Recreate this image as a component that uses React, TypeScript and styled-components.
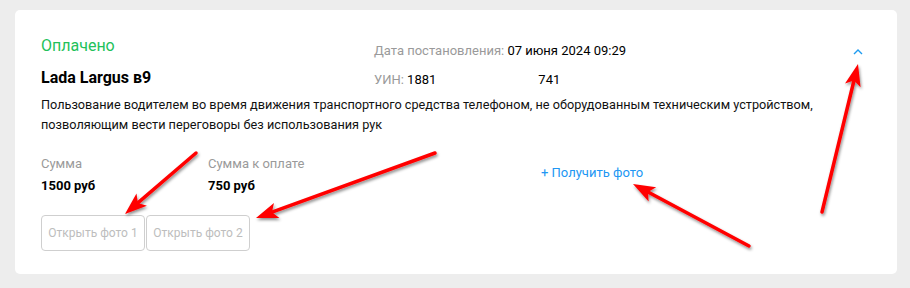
import React from "react";
import styled, { createGlobalStyle } from "styled-components";

const GlobalStyle = createGlobalStyle`
  body {
    margin: 0;
    background: #ededed;
    font-family: Roboto, "Liberation Sans", Arial, sans-serif;
  }
`;

const Page = styled.div`
  position: relative;
  width: 910px;
  height: 288px;
  padding: 10px 13px 14px 15px;
  box-sizing: border-box;
`;

const Card = styled.div`
  background: #ffffff;
  border-radius: 5px;
  padding: 26px 26px 24px 26px;
  height: 100%;
  box-sizing: border-box;
`;

const Header = styled.div`
  display: grid;
  grid-template-columns: 333px 1fr 20px;
`;

const Status = styled.div`
  color: #22c15a;
  font-size: 16px;
  line-height: 19px;
`;

const CarName = styled.div`
  margin-top: 13px;
  color: #000;
  font-size: 16px;
  font-weight: 700;
  line-height: 19px;
`;

const Meta = styled.div`
  padding-top: 7px;
  display: flex;
  flex-direction: column;
  gap: 13px;
`;

const MetaRow = styled.div`
  font-size: 13px;
  line-height: 16px;
  color: #000;
`;

const MetaLabel = styled.span`
  color: #9a9a9a;
`;

const Hidden = styled.span`
  display: inline-block;
  width: 102px;
`;

const Chevron = styled.button`
  align-self: start;
  margin-top: 9px;
  border: 0;
  padding: 0;
  background: none;
  width: 14px;
  height: 14px;
  display: flex;
  align-items: center;
  justify-content: center;
  cursor: pointer;
`;

const Description = styled.p`
  margin: 7px 0 0 0;
  font-size: 12.7px;
  line-height: 19.5px;
  color: #111;
`;

const Bottom = styled.div`
  margin-top: 22px;
  display: grid;
  grid-template-columns: 500px 1fr;
`;

const Sums = styled.div`
  display: grid;
  grid-template-columns: 167px auto;
`;

const SumLabel = styled.div`
  font-size: 13px;
  line-height: 16px;
  color: #9a9a9a;
`;

const SumValue = styled.div`
  margin-top: 6px;
  font-size: 13px;
  line-height: 16px;
  font-weight: 700;
  color: #000;
`;

const GetPhoto = styled.a`
  margin-top: 9px;
  align-self: start;
  font-size: 13px;
  line-height: 16px;
  color: #2196f3;
  text-decoration: none;
  cursor: pointer;
`;

const Buttons = styled.div`
  margin-top: 21px;
  display: flex;
  gap: 1px;
`;

const PhotoButton = styled.button`
  width: 104px;
  height: 36px;
  border: 1px solid #cfcfcf;
  border-radius: 4px;
  background: #fff;
  color: #bdbdbd;
  font-family: Roboto, "Liberation Sans", Arial, sans-serif;
  font-size: 12px;
  padding: 0;
`;

const Overlay = styled.svg`
  position: absolute;
  left: 0;
  top: 0;
  pointer-events: none;
`;

type ArrowProps = { x1: number; y1: number; x2: number; y2: number };

const Arrow: React.FC<ArrowProps> = ({ x1, y1, x2, y2 }) => {
  const dx = x2 - x1;
  const dy = y2 - y1;
  const len = Math.hypot(dx, dy);
  const ux = dx / len;
  const uy = dy / len;
  const head = 22;
  const half = 8;
  const bx = x2 - ux * head;
  const by = y2 - uy * head;
  const pts = `${x2},${y2} ${bx - uy * half},${by + ux * half} ${bx + ux * 5},${by + uy * 5} ${bx + uy * half},${by - ux * half}`;
  return (
    <g filter="url(#shadow)">
      <line x1={x1} y1={y1} x2={bx + ux * 5} y2={by + uy * 5} stroke="#ff0000" strokeWidth={3.5} strokeLinecap="round" />
      <polygon points={pts} fill="#ff0000" />
    </g>
  );
};

export default function App() {
  return (
    <>
      <GlobalStyle />
      <Page>
        <Card>
          <Header>
            <div>
              <Status>Оплачено</Status>
              <CarName>Lada Largus в9</CarName>
            </div>
            <Meta>
              <MetaRow>
                <MetaLabel>Дата постановления: </MetaLabel>07 июня 2024 09:29
              </MetaRow>
              <MetaRow>
                <MetaLabel>УИН: </MetaLabel>1881<Hidden />741
              </MetaRow>
            </Meta>
            <Chevron aria-label="Свернуть">
              <svg width="10" height="6" viewBox="0 0 10 6">
                <path d="M1 5 L5 1 L9 5" fill="none" stroke="#1e9bf0" strokeWidth="1.4" />
              </svg>
            </Chevron>
          </Header>
          <Description>
            Пользование водителем во время движения транспортного средства телефоном, не оборудованным техническим
            устройством, позволяющим вести переговоры без использования рук
          </Description>
          <Bottom>
            <div>
              <Sums>
                <div>
                  <SumLabel>Сумма</SumLabel>
                  <SumValue>1500 руб</SumValue>
                </div>
                <div>
                  <SumLabel>Сумма к оплате</SumLabel>
                  <SumValue>750 руб</SumValue>
                </div>
              </Sums>
              <Buttons>
                <PhotoButton>Открыть фото 1</PhotoButton>
                <PhotoButton>Открыть фото 2</PhotoButton>
              </Buttons>
            </div>
            <GetPhoto>+ Получить фото</GetPhoto>
          </Bottom>
        </Card>
        <Overlay width="910" height="288" viewBox="0 0 910 288">
          <defs>
            <filter id="shadow" x="-20%" y="-20%" width="140%" height="140%">
              <feDropShadow dx="1" dy="2" stdDeviation="1.6" floodColor="#000" floodOpacity="0.45" />
            </filter>
          </defs>
          <Arrow x1={196} y1={153} x2={125} y2={214} />
          <Arrow x1={435} y1={153} x2={256} y2={218} />
          <Arrow x1={749} y1={246} x2={633} y2={184} />
          <Arrow x1={822} y1={212} x2={858} y2={64} />
        </Overlay>
      </Page>
    </>
  );
}
